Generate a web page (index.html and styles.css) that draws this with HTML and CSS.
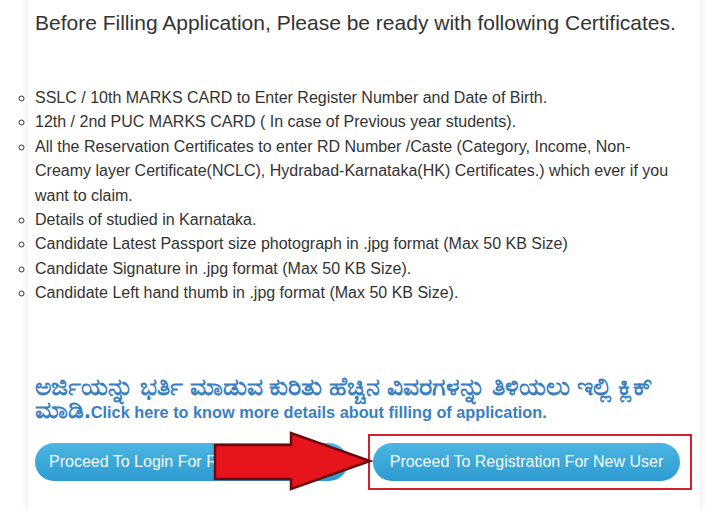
FILE: index.html
```html
<!DOCTYPE html>
<html>
<head>
<meta charset="utf-8">
<link rel="stylesheet" href="styles.css">
</head>
<body>
<div class="card">
  <h2 class="title">Before Filling Application, Please be ready with following Certificates.</h2>
  <ul class="list">
    <li>SSLC / 10th MARKS CARD to Enter Register Number and Date of Birth.</li>
    <li>12th / 2nd PUC MARKS CARD ( In case of Previous year students).</li>
    <li>All the Reservation Certificates to enter RD Number /Caste (Category, Income, Non-Creamy layer Certificate(NCLC), Hydrabad-Karnataka(HK) Certificates.) which ever if you want to claim.</li>
    <li>Details of studied in Karnataka.</li>
    <li>Candidate Latest Passport size photograph in .jpg format (Max 50 KB Size)</li>
    <li>Candidate Signature in .jpg format (Max 50 KB Size).</li>
    <li>Candidate Left hand thumb in .jpg format (Max 50 KB Size).</li>
  </ul>
  <a class="info"><span class="kn">ಅರ್ಜಿಯನ್ನು ಭರ್ತಿ ಮಾಡುವ ಕುರಿತು ಹೆಚ್ಚಿನ ವಿವರಗಳನ್ನು ತಿಳಿಯಲು ಇಲ್ಲಿ ಕ್ಲಿಕ್ ಮಾಡಿ.</span>Click here to know more details about filling of application.</a>
  <div class="actions">
    <button class="btn btn-login">Proceed To Login For Registered User</button>
    <div class="highlight">
      <button class="btn btn-reg">Proceed To Registration For New User</button>
    </div>
    <svg class="arrow" width="164" height="64" viewBox="0 0 164 64">
      <polygon points="2,14 78,14 78,2 157,30 78,58 78,48 2,48" fill="#e8141c" stroke="#6a0a0e" stroke-width="2.5" stroke-linejoin="miter"/>
    </svg>
  </div>
</div>
</body>
</html>
```

FILE: styles.css
```css
html, body {
  margin: 0;
  padding: 0;
  background: #ffffff;
}
body {
  font-family: "Liberation Sans", Arial, "Noto Sans", sans-serif;
  color: #333333;
}
.card {
  margin: -20px 0 0 28px;
  width: 672px;
  height: 530px;
  background: #ffffff;
  box-shadow: 0 2px 8px rgba(0, 0, 0, 0.10);
  border-radius: 4px;
  box-sizing: border-box;
  padding: 31px 0 0 7px;
  position: relative;
}
.title {
  margin: 0;
  font-size: 21px;
  font-weight: normal;
  line-height: 24px;
  color: #333333;
}
.list {
  margin: 51px 0 0 0;
  padding: 0;
  list-style: circle outside;
  font-size: 16px;
  line-height: 24.4px;
  color: #333333;
  width: 648px;
}
.info {
  display: block;
  margin-top: 72px;
  font-size: 16.3px;
  font-weight: bold;
  line-height: 23px;
  color: #3a7fc1;
  width: 660px;
}
.kn {
  font-size: 24.5px;
  line-height: 0;
}
.actions {
  position: relative;
  display: flex;
  align-items: center;
  margin-top: 10px;
}
.btn {
  height: 38px;
  border: none;
  border-radius: 19px;
  background: linear-gradient(#4cb6e2, #2c9bd0);
  color: #f4fbff;
  font-family: "Liberation Sans", Arial, sans-serif;
  font-size: 16px;
  padding: 0 14px;
  white-space: nowrap;
  overflow: hidden;
}
.btn-login {
  width: 313px;
  text-align: left;
}
.highlight {
  margin-left: 20px;
  border: 2px solid #d3212b;
  padding: 7px 10px 7px 3px;
}
.btn-reg {
  width: 307px;
  text-align: center;
}
.arrow {
  position: absolute;
  left: 178px;
  top: -3px;
}
```
